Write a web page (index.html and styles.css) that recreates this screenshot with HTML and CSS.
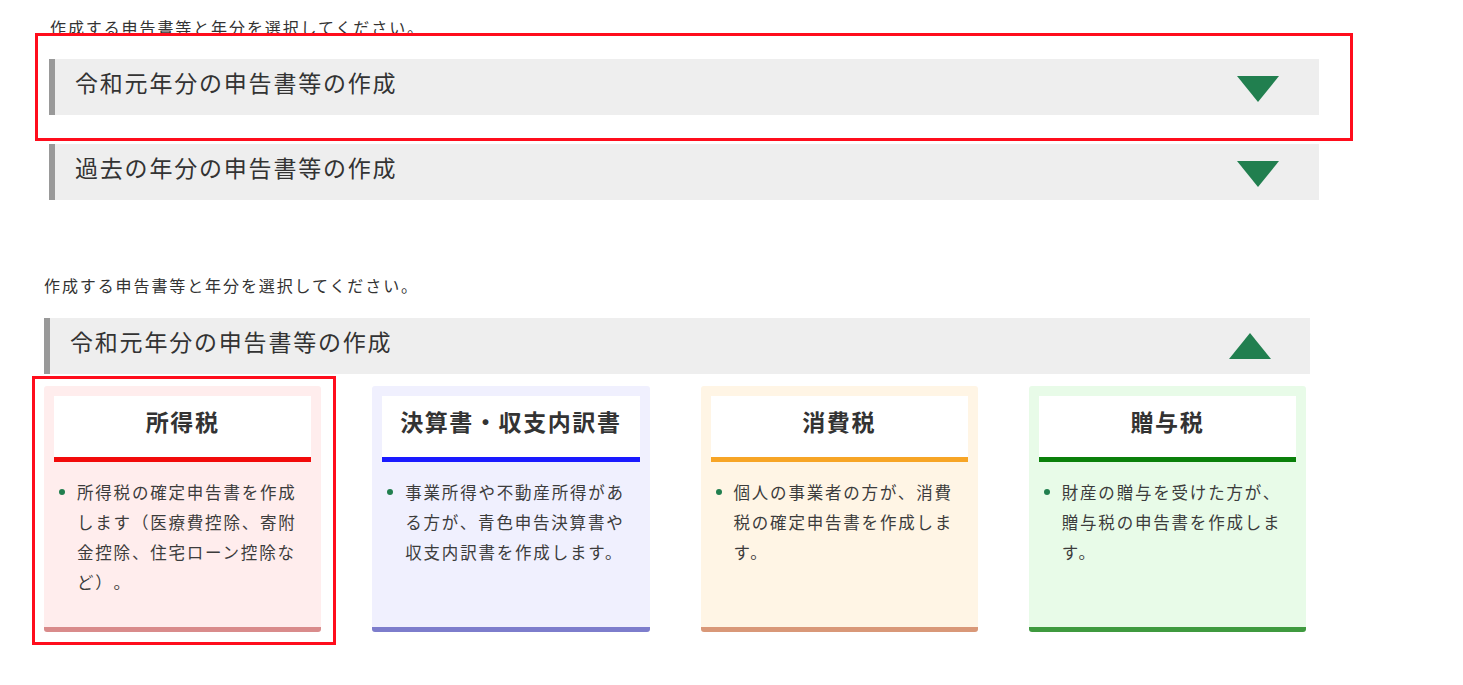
FILE: index.html
```html
<!DOCTYPE html>
<html lang="ja">
  <head>
    <meta charset="UTF-8" />
    <meta name="viewport" content="width=device-width, initial-scale=1.0" />
    <title>申告書等の作成</title>
    <link rel="stylesheet" href="styles.css">
  </head>
  <body>
    <!-- === closed state === -->
    <section class="shot shot-closed">
      <p class="lead">作成する申告書等と年分を選択してください。</p>
      <div class="acc">
        <span class="acc-title">令和元年分の申告書等の作成</span>
        <svg class="tri tri-down" width="42" height="26" viewBox="0 0 42 26"><polygon points="0,0 42,0 21,26" /></svg>
      </div>
      <div class="acc">
        <span class="acc-title">過去の年分の申告書等の作成</span>
        <svg class="tri tri-down" width="42" height="26" viewBox="0 0 42 26"><polygon points="0,0 42,0 21,26" /></svg>
      </div>
    </section>

    <!-- === open state === -->
    <section class="shot shot-open">
      <p class="lead">作成する申告書等と年分を選択してください。</p>
      <div class="acc">
        <span class="acc-title">令和元年分の申告書等の作成</span>
        <svg class="tri tri-up" width="42" height="26" viewBox="0 0 42 26"><polygon points="21,0 42,26 0,26" /></svg>
      </div>

      <div class="cards">
        <div class="card card-income">
          <h3 class="card-head">所得税</h3>
          <ul class="card-list">
            <li>所得税の確定申告書を作成します（医療費控除、寄附金控除、住宅ローン控除など）。</li>
          </ul>
        </div>
        <div class="card card-account">
          <h3 class="card-head">決算書・収支内訳書</h3>
          <ul class="card-list">
            <li>事業所得や不動産所得がある方が、青色申告決算書や収支内訳書を作成します。</li>
          </ul>
        </div>
        <div class="card card-consume">
          <h3 class="card-head">消費税</h3>
          <ul class="card-list">
            <li>個人の事業者の方が、消費税の確定申告書を作成します。</li>
          </ul>
        </div>
        <div class="card card-gift">
          <h3 class="card-head">贈与税</h3>
          <ul class="card-list">
            <li>財産の贈与を受けた方が、贈与税の申告書を作成します。</li>
          </ul>
        </div>
      </div>
    </section>

    <!-- annotation frames -->
    <div class="mark mark-top"></div>
    <div class="mark mark-card"></div>
  </body>
</html>
```

FILE: styles.css
```css
html {
  min-height: 100%;
}

body {
  margin: 0;
  padding-bottom: 50px;
  position: relative;
  font-family: "Noto Sans CJK JP", "Noto Sans", sans-serif;
  color: #333;
  background: #fff;
  text-spacing-trim: space-all;
}

.shot-closed {
  padding: 17px 0 0 49px;
}

.shot-open {
  padding: 46px 0 0 44px;
}

p.lead {
  margin: 0 0 22px 1px;
  font-size: 16px;
  line-height: 20px;
  letter-spacing: 1.9px;
  color: #333;
}

.shot-open p.lead {
  margin: 0 0 23px 0;
}

.acc {
  box-sizing: border-box;
  display: flex;
  align-items: center;
  justify-content: space-between;
  height: 56px;
  width: 1270px;
  margin-bottom: 29px;
  padding: 0 40px 0 20px;
  background: #eee;
  border-left: 6px solid #999;
}

.shot-open .acc {
  width: 1266px;
  margin-bottom: 12px;
  padding-right: 39px;
}

.acc-title {
  font-size: 23px;
  letter-spacing: 1.8px;
  color: #333;
  margin-bottom: 10px;
}

.tri {
  display: block;
  fill: #217f4f;
}

.tri-down {
  margin-top: 4px;
}

.cards {
  display: grid;
  grid-template-columns: repeat(4, 1fr);
  gap: 51px;
  width: 1262px;
}

.card {
  box-sizing: border-box;
  padding: 10px 10px 30px;
  border-radius: 3px;
  border-bottom: 5px solid;
}

.card-head {
  margin: 0;
  height: 61px;
  line-height: 50px;
  background: #fff;
  border-bottom: 5px solid;
  text-align: center;
  font-size: 23px;
  font-weight: bold;
  letter-spacing: 1.6px;
  color: #333;
}

.card-list {
  list-style: none;
  margin: 15px 0 0;
  padding: 0 8px 0 23px;
}

.card-list li {
  position: relative;
  font-size: 16.5px;
  line-height: 30px;
  letter-spacing: 1.8px;
  color: #3c3c3c;
}

.card-list li::before {
  content: "";
  position: absolute;
  left: -18px;
  top: 12px;
  width: 6px;
  height: 6px;
  border-radius: 50%;
  background: #217f4f;
}

.card-income {
  background: #ffeded;
  border-bottom-color: #d98b8b;
}
.card-income .card-head {
  border-bottom-color: #f20a0a;
}

.card-account {
  background: #f0f0fe;
  border-bottom-color: #7d7dcc;
}
.card-account .card-head {
  border-bottom-color: #1a1aff;
}

.card-consume {
  background: #fff5e5;
  border-bottom-color: #d99878;
}
.card-consume .card-head {
  border-bottom-color: #f7a526;
}

.card-gift {
  background: #e8fbe8;
  border-bottom-color: #3f9a3f;
}
.card-gift .card-head {
  border-bottom-color: #0a800a;
}

/* red annotation frames drawn over the shot */
.mark {
  position: absolute;
  box-sizing: border-box;
  border: 3px solid #ff0d1c;
}

.mark-top {
  left: 35px;
  top: 33px;
  width: 1318px;
  height: 108px;
}

.mark-card {
  left: 32px;
  top: 376px;
  width: 304px;
  height: 269px;
}
```
